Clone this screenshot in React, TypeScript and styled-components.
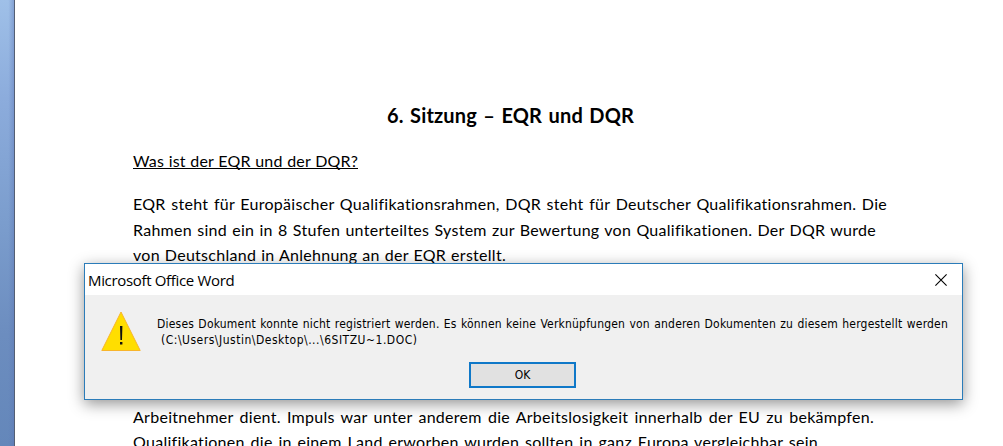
import styled, {createGlobalStyle} from "styled-components";

const GlobalStyle = createGlobalStyle`
  * {
    box-sizing: border-box;
  }

  body {
    margin: 0;
    background: white;
    overflow: hidden;
  }
`;

const Window = styled.div`
  position: relative;
  display: flex;
  width: 1003px;
  height: 446px;
  overflow: hidden;
`;

const Gutter = styled.div`
  flex: none;
  width: 15px;
  border-right: 1px solid #545f74;
  background: linear-gradient(to right, transparent 60%, rgba(90, 115, 180, 0.4)),
    linear-gradient(#9fc0e8, #8cacdc 22%, #7b9dcd 50%, #6c8dbf 75%, #6487ba);
`;

const Page = styled.main`
  flex: 1;
  padding: 102px 0 0 118px;
  background: white;
  color: black;
  font-family: Lato, "Liberation Sans", sans-serif;
  font-variant-ligatures: none;
`;

const Title = styled.h1<{ $width: number }>`
  width: ${({$width}) => $width}px;
  margin: 0 0 0 254px;
  font-size: 20px;
  font-weight: 700;
  line-height: 26px;
  letter-spacing: 0.15px;
  white-space: nowrap;
  text-align-last: justify;
`;

const Subtitle = styled.h2`
  width: 225px;
  height: 19px;
  margin: 22px 0;
  border-bottom: 1px solid black;
  font-size: 16px;
  font-weight: 400;
  line-height: 21px;
  letter-spacing: 0.15px;
  white-space: nowrap;
  text-align-last: justify;
`;

const Paragraph = styled.div<{ $gap?: number }>`
  margin-top: ${({$gap = 0}) => $gap}px;
`;

const Line = styled.p<{ $width: number }>`
  width: ${({$width}) => $width}px;
  margin: 0;
  font-size: 16px;
  line-height: 25.5px;
  letter-spacing: 0.28px;
  white-space: nowrap;
  text-align-last: justify;
`;

const Dialog = styled.section`
  position: absolute;
  top: 263px;
  left: 84px;
  width: 879px;
  height: 137px;
  border: 1px solid #2b7cb9;
  background: #f0f0f0;
  box-shadow: 0 4px 14px rgba(0, 0, 0, 0.42);
  color: black;
`;

const TitleBar = styled.header`
  display: flex;
  align-items: center;
  justify-content: space-between;
  height: 31px;
  padding: 0 15px 0 3px;
  background: white;
  font: 15px/30px "Open Sans", "Noto Sans", sans-serif;
`;

const TitleText = styled.span`
  letter-spacing: -0.33px;
`;

const CloseButton = styled.button`
  display: flex;
  padding: 0;
  border: 0;
  background: none;
`;

const Content = styled.div`
  display: flex;
  height: 67px;
  padding: 15px 0 0 16px;
`;

const Message = styled.div`
  margin: 6px 0 0 16px;
  font: 12px/16px "DejaVu Sans Condensed", "DejaVu Sans", sans-serif;
  font-stretch: condensed;
`;

const MessageLine = styled.div<{ $width: number; $indent?: number; $tracking: number }>`
  width: ${({$width}) => $width}px;
  margin-left: ${({$indent = 0}) => $indent}px;
  letter-spacing: ${({$tracking}) => $tracking}px;
  white-space: nowrap;
  text-align-last: justify;
`;

const OkButton = styled.button`
  display: block;
  width: 107px;
  height: 26px;
  margin-left: 384px;
  padding: 0;
  border: 2px solid #0f78c8;
  background: #e1e1e1;
  color: black;
  font: 12px/22px "DejaVu Sans Condensed", "DejaVu Sans", sans-serif;
  font-stretch: condensed;
`;

const WarningIcon = () => (
    <svg width="40" height="42" viewBox="0 0 40 42">
        <path d="M20 2 39.2 40.5H.8z" fill="#ffde00" stroke="#f8b52b"/>
        <path d="M19 16h2.4l-.4 14h-1.6zM19 32h2.4v2.4H19z" fill="#111"/>
    </svg>
);

const CloseIcon = () => (
    <svg width="12" height="12" viewBox="0 0 12 12">
        <path d="M.4.4 11.6 11.6M11.6.4.4 11.6" stroke="black" strokeWidth="1.1"/>
    </svg>
);

export default function App() {
    return (
        <Window>
            <GlobalStyle/>
            <Gutter/>
            <Page>
                <Title $width={247}>6. Sitzung – EQR und DQR</Title>
                <Subtitle>Was ist der EQR und der DQR?</Subtitle>
                <Paragraph>
                    <Line $width={754}>EQR steht für Europäischer Qualifikationsrahmen, DQR steht für Deutscher Qualifikationsrahmen. Die</Line>
                    <Line $width={743}>Rahmen sind ein in 8 Stufen unterteiltes System zur Bewertung von Qualifikationen. Der DQR wurde</Line>
                    <Line $width={373}>von Deutschland in Anlehnung an der EQR erstellt.</Line>
                </Paragraph>
                <Paragraph $gap={136}>
                    <Line $width={741}>Arbeitnehmer dient. Impuls war unter anderem die Arbeitslosigkeit innerhalb der EU zu bekämpfen.</Line>
                    <Line $width={685}>Qualifikationen die in einem Land erworben wurden sollten in ganz Europa vergleichbar sein</Line>
                </Paragraph>
            </Page>
            <Dialog>
                <TitleBar>
                    <TitleText>Microsoft Office Word</TitleText>
                    <CloseButton aria-label="Schließen"><CloseIcon/></CloseButton>
                </TitleBar>
                <Content>
                    <WarningIcon/>
                    <Message>
                        <MessageLine $width={791} $tracking={0.2}>Dieses Dokument konnte nicht registriert werden. Es können keine Verknüpfungen von anderen Dokumenten zu diesem hergestellt werden</MessageLine>
                        <MessageLine $width={256} $indent={4} $tracking={0.51}>(C:\Users\Justin\Desktop\...\6SITZU~1.DOC)</MessageLine>
                    </Message>
                </Content>
                <OkButton>OK</OkButton>
            </Dialog>
        </Window>
    );
}
